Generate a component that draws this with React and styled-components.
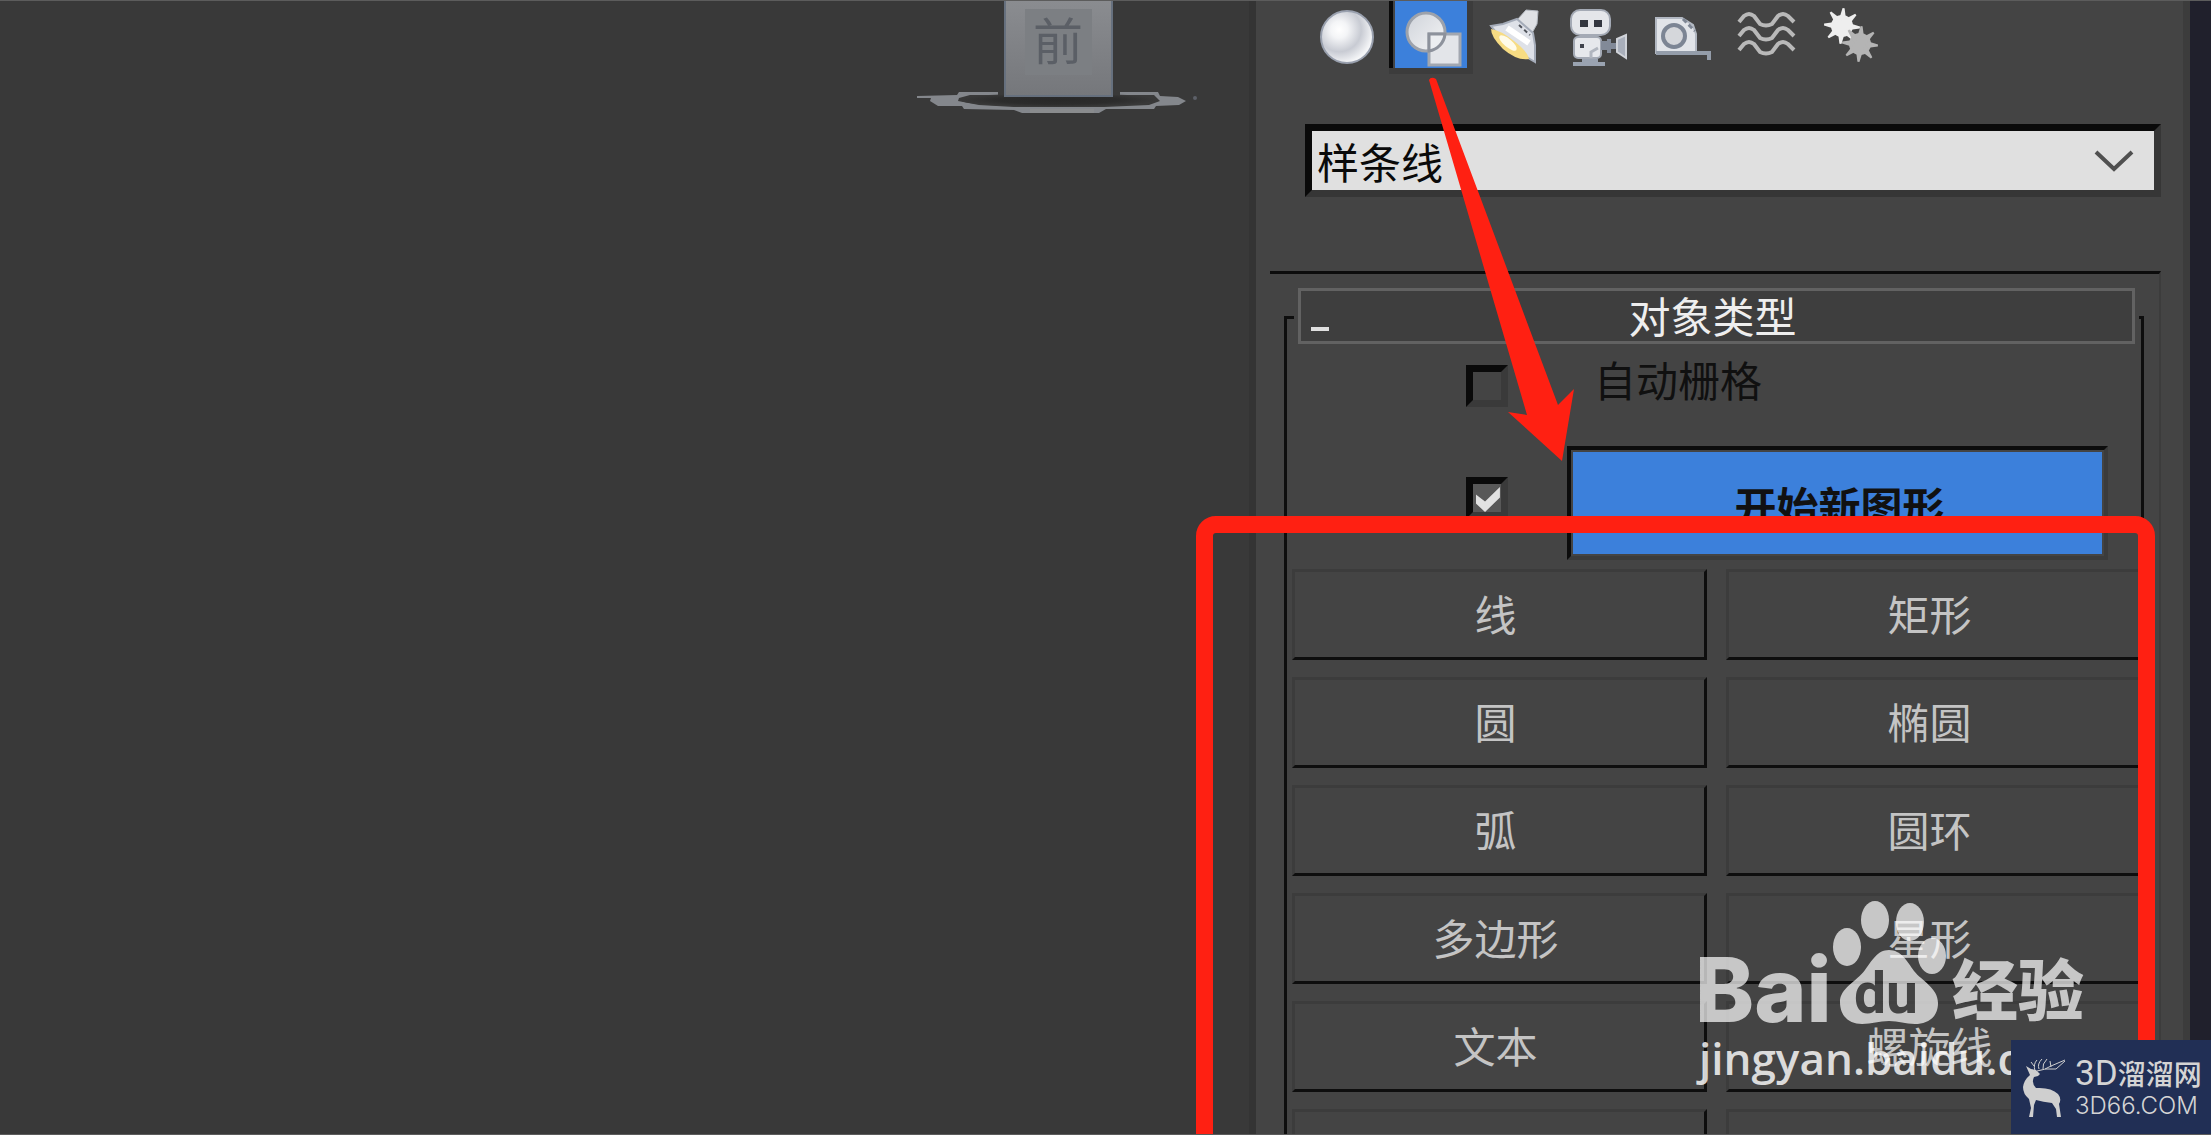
import React, { useState } from 'react';
import styled, { createGlobalStyle } from 'styled-components';

const tools = [
  { name: '几何体', Icon: SphereIcon },
  { name: '图形', Icon: ShapesIcon },
  { name: '灯光', Icon: LampIcon },
  { name: '摄影机', Icon: CameraIcon },
  { name: '辅助对象', Icon: TapeIcon },
  { name: '空间扭曲', Icon: WavesIcon },
  { name: '系统', Icon: GearsIcon },
];

const shapes = [
  '线',
  '矩形',
  '圆',
  '椭圆',
  '弧',
  '圆环',
  '多边形',
  '星形',
  '文本',
  '螺旋线',
  '卵形',
  '截面',
];

export default function App() {
  const [tool, setTool] = useState('图形');
  const [grid, setGrid] = useState(false);
  const [fresh, setFresh] = useState(true);
  return (
    <>
      <GlobalStyle />
      <Page>
        <Viewport>
          <ViewCube />
        </Viewport>
        <Side>
          <Panel>
            <Toolbar>
              {tools.map(({ name, Icon }) => (
                <Tool
                  key={name}
                  aria-label={name}
                  $active={tool === name}
                  onClick={() => setTool(name)}
                >
                  <Icon />
                </Tool>
              ))}
            </Toolbar>
            <SelectBox>
              <Select aria-label="类别" defaultValue="样条线">
                <option>样条线</option>
              </Select>
              <Chevron viewBox="0 0 40 22">
                <path d="M2 2 L20 19 L38 2" />
              </Chevron>
            </SelectBox>
            <Rollout>
              <Header>
                <Dash />
                对象类型
              </Header>
              <Group>
                <Options>
                  <Checks>
                    <Check
                      id="grid"
                      checked={grid}
                      onChange={() => setGrid(!grid)}
                    />
                    <Check
                      aria-labelledby="fresh"
                      checked={fresh}
                      onChange={() => setFresh(!fresh)}
                    />
                  </Checks>
                  <Names>
                    <Label htmlFor="grid">自动栅格</Label>
                    <StartButton id="fresh">开始新图形</StartButton>
                  </Names>
                </Options>
                <ShapeGrid>
                  {shapes.map(item => (
                    <ShapeButton key={item}>{item}</ShapeButton>
                  ))}
                </ShapeGrid>
              </Group>
            </Rollout>
            <Frame />
            <Arrow viewBox="0 0 160 392">
              <path d="M5 10 Q7 6 12 9 L134 335 L150 319 L138 391 L84 342 L103 345 Z" />
            </Arrow>
          </Panel>
        </Side>
        <Watermark>
          <BaiduLogo />
          <Site>jingyan.baidu.com</Site>
        </Watermark>
        <Badge>
          <Deer />
          <BadgeText>
            <BadgeTitle>
              <span>3D</span>溜溜网
            </BadgeTitle>
            <BadgeSite>3D66.COM</BadgeSite>
          </BadgeText>
        </Badge>
      </Page>
    </>
  );
}

function ViewCube() {
  return (
    <Cube viewBox="0 0 286 118">
      <defs>
        <linearGradient id="face" x1="0" y1="0" x2="0" y2="1">
          <stop offset="0" stopColor="#8b8d91" />
          <stop offset="1" stopColor="#75777b" />
        </linearGradient>
        <radialGradient id="shade">
          <stop offset="0" stopColor="#282828" />
          <stop offset="0.6" stopColor="#2c2c2c" />
          <stop offset="1" stopColor="#393939" />
        </radialGradient>
      </defs>
      <path
        fill="#84878c"
        fillRule="evenodd"
        d="M3 95 L43 94 L45 91 H84 V94 H56 L45 97 L44 100 L65 104 L100 106 H190 L235 104 L246 100 L240 94 H206 V91 H244 L246 95 L264 96 L272 100 L265 104 L242 105 L240 108 H192 L185 112 H108 L100 109 L50 108 L48 105 H24 L16 100 L17 97 L3 97 Z"
      />
      <ellipse cx="144" cy="99" rx="98" ry="7" fill="url(#shade)" />
      <path d="M116 110 h64" stroke="#8a8c8e" strokeWidth="4" />
      <circle cx="281" cy="97" r="2" fill="#5d6068" />
      <rect x="91" y="-4" width="107" height="99" fill="url(#face)" stroke="#66707e" strokeWidth="2" />
      <rect x="111" y="8" width="67" height="66" fill="#7c7f83" />
      <text x="144" y="59" fontSize="50" fill="#5b5f66" textAnchor="middle">
        前
      </text>
    </Cube>
  );
}

function SphereIcon() {
  return (
    <Icon64>
      <defs>
        <radialGradient id="ball" cx="0.35" cy="0.36" r="0.65">
          <stop offset="0" stopColor="#ffffff" />
          <stop offset="0.25" stopColor="#f4f5f7" />
          <stop offset="0.65" stopColor="#c8cbd3" />
          <stop offset="1" stopColor="#f4f5f7" />
        </radialGradient>
      </defs>
      <circle cx="32" cy="32" r="26" fill="url(#ball)" stroke="#99a0ae" strokeWidth="2" />
    </Icon64>
  );
}

function ShapesIcon() {
  return (
    <Icon64>
      <defs>
        <linearGradient id="plate" x1="0" y1="0" x2="1" y2="1">
          <stop offset="0" stopColor="#cfd3da" />
          <stop offset="1" stopColor="#f5f5f6" />
        </linearGradient>
      </defs>
      <circle cx="28" cy="29" r="19" fill="url(#plate)" stroke="#9da2ab" strokeWidth="3" />
      <rect x="31" y="31" width="31" height="31" fill="#e3e5e9" stroke="#a2a7b0" strokeWidth="3" />
      <path d="M31 31 H47 A19 19 0 0 1 31 48 Z" fill="#eceef1" stroke="#8d929c" strokeWidth="3" />
    </Icon64>
  );
}

function LampIcon() {
  return (
    <Icon64>
      <path d="M34 15 L43 5 L55 6 L54 19 L49 28 Z" fill="#dfe1e5" stroke="#b5bac2" strokeWidth="1" />
      <path d="M8 21 L20 19 L34 14 L50 28 L52 40 L52 57 Q22 40 8 21 Z" fill="#dee1e8" stroke="#a5acb9" strokeWidth="2" />
      <path d="M36 20 L47 30" stroke="#50545c" strokeWidth="2" strokeDasharray="4 3" />
      <path d="M24 23 L46 38" stroke="#ffffff" strokeWidth="6" />
      <path d="M8 24 Q17 25 31 36 Q45 47 46 54 Q34 56 20 44 Q8 32 8 24 Z" fill="#f7dc83" />
      <ellipse cx="25" cy="38" rx="11" ry="4" transform="rotate(40 25 38)" fill="#fffbe9" />
    </Icon64>
  );
}

function CameraIcon() {
  return (
    <Icon64>
      <rect x="4" y="5" width="39" height="25" rx="9" fill="#e4e6ea" stroke="#a4aab5" strokeWidth="2" />
      <rect x="13" y="15" width="8" height="7" fill="#333740" />
      <rect x="27" y="15" width="8" height="7" fill="#333740" />
      <rect x="7" y="32" width="27" height="21" rx="4" fill="#e6e8ec" stroke="#a4aab5" strokeWidth="2" />
      <rect x="13" y="39" width="4" height="4" fill="#40444d" />
      <path d="M24 53 V47 L31 43" stroke="#b1b6bf" strokeWidth="3" fill="none" />
      <path d="M34 36 H40 V34 H44 V38 H49 V44 H44 V48 H40 V45 H34 Z" fill="#828a98" />
      <path d="M50 34 L59 30 V53 L50 47 Z" fill="#a9afbb" stroke="#d0d3d9" strokeWidth="2" />
      <path d="M15 56 H31 M6 59 H38" stroke="#9aa3b1" strokeWidth="4" />
    </Icon64>
  );
}

function TapeIcon() {
  return (
    <Icon64>
      <path d="M5 13 H31 L42 20 L45 29 V48 H5 Z" fill="#e1e4e9" stroke="#b2b8c2" strokeWidth="2" />
      <path d="M32 14 L44 26" stroke="#7e8694" strokeWidth="3" strokeDasharray="5 3" />
      <circle cx="23" cy="31" r="11" fill="#d5d7db" stroke="#7c8594" strokeWidth="4" />
      <path d="M5 48 H58 V55" stroke="#949daa" strokeWidth="4" fill="none" />
    </Icon64>
  );
}

function WavesIcon() {
  return (
    <Icon64>
      {[17, 31, 45].map(y => (
        <path
          key={y}
          d={`M4 ${y} L9 ${y - 6} Q14 ${y - 10} 19 ${y - 6} L25 ${y + 2} Q31 ${y + 5} 37 ${y + 2} L43 ${y - 6} Q48 ${y - 10} 53 ${y - 6} L59 ${y}`}
          fill="none"
          stroke="#b9b9b9"
          strokeWidth="4"
        />
      ))}
    </Icon64>
  );
}

function Gear({ x, y, color }) {
  return (
    <g transform={`translate(${x} ${y})`} fill={color}>
      <circle r="11" />
      {[5, 50, 95, 140].map(a => (
        <path
          key={a}
          d="M-18 -1 L0 -5 L18 -1 V1 L0 5 L-18 1 Z"
          transform={`rotate(${a})`}
        />
      ))}
    </g>
  );
}

function GearsIcon() {
  return (
    <Icon64>
      <Gear x={23} y={21} color="#eeeeee" />
      <Gear x={41} y={39} color="#b4b4b4" />
    </Icon64>
  );
}

function BaiduLogo() {
  return (
    <Logo viewBox="0 0 400 132">
      <g fill="#ffffff">
        <text x="-1" y="122" fontFamily="Inter" fontWeight="800" fontSize="89">
          Bai
        </text>
        <ellipse cx="151" cy="47" rx="14" ry="19" />
        <ellipse cx="179" cy="20" rx="14" ry="19" />
        <ellipse cx="214" cy="22" rx="14" ry="19" />
        <ellipse cx="236" cy="56" rx="14" ry="18" />
        <path d="M193 50 C205 50 211 61 218 71 C226 81 242 88 242 103 C242 118 231 124 219 124 C209 124 203 121 193 121 C183 121 176 124 166 124 C153 124 144 116 144 102 C144 88 160 82 169 70 C176 61 181 50 193 50 Z" />
        <text x="256" y="115" fontWeight="900" fontSize="66">
          经验
        </text>
      </g>
      <text x="158" y="113" fontFamily="Roboto" fontWeight="700" fontSize="57" fill="#444444">
        du
      </text>
    </Logo>
  );
}

function Deer() {
  return (
    <DeerSvg viewBox="0 0 44 60">
      <path
        fill="#cfcfcf"
        d="M3 8 L8 11 L13 12 L17 16 L15 18 L11 19 Q8 25 13 30 Q28 29 35 36 Q39 41 36 46 L38 59 H34 L33 51 L29 45 Q20 44 13 42 L11 47 L10 59 H6 L8 50 L6 41 Q0 36 0 29 Q1 22 7 17 Z"
      />
      <path
        fill="none"
        stroke="#cfcfcf"
        strokeWidth="1"
        d="M12 13 Q10 6 14 2 M11 8 L8 4 M14 13 Q22 12 28 8 L42 2 M16 11 Q14 6 19 1 M20 11 Q19 6 24 1 M28 9 L27 3 M22 11 L33 11 L42 3"
      />
    </DeerSvg>
  );
}

const GlobalStyle = createGlobalStyle`
  * {
    box-sizing: border-box;
  }
  body {
    margin: 0;
    background: #393939;
    font-family: 'Noto Sans CJK SC', sans-serif;
  }
  button, select {
    font-family: inherit;
    border-radius: 0;
  }
`;
const Page = styled.div`
  position: relative;
  display: grid;
  grid-template-columns: minmax(0, 1315fr) minmax(0, 1000fr);
  height: 100vh;
  overflow: hidden;
  border-top: 1px solid #5c5c5c;
  border-bottom: 1px solid #5c5c5c;
`;
const Viewport = styled.main`
  display: flex;
  justify-content: flex-end;
  align-items: flex-start;
  padding-right: 49px;
  background: #393939;
  border-right: 7px solid #343434;
`;
const Cube = styled.svg`
  width: 286px;
  height: 118px;
`;
const Side = styled.aside`
  min-height: 0;
  background: #20202c;
  padding-right: 21px;
`;
const Panel = styled.div`
  position: relative;
  min-height: 100%;
  padding: 0 22px 0 14px;
  background: #444444;
  border-right: 7px solid #3c3c3c;
`;
const Toolbar = styled.div`
  display: flex;
  margin-left: 35px;
`;
const Tool = styled.button`
  display: flex;
  align-items: center;
  justify-content: center;
  width: 84px;
  height: 73px;
  padding: 0 0 2px;
  border: 0 solid #3c3c3c;
  background: ${p => (p.$active ? '#3c80db' : 'transparent')};
  ${p =>
    p.$active &&
    `
    padding: 0 0 0 4px;
    border-width: 0 6px 6px 0;
    box-shadow: inset 4px 0 #0a0a0a, inset 6px 0 #444444;
  `}
`;
const Icon64 = styled.svg.attrs({ viewBox: '0 0 64 64' })`
  flex: none;
  width: 64px;
  height: 64px;
`;
const SelectBox = styled.div`
  display: grid;
  align-items: center;
  margin: 50px 0 0 35px;
`;
const Select = styled.select`
  grid-area: 1 / 1;
  appearance: none;
  width: 100%;
  height: 73px;
  padding: 0 6px 0 5px;
  border: 7px solid;
  border-color: #0a0a0a #363636 #363636 #0a0a0a;
  background: #e0e0e0;
  color: #0a0a0a;
  font-size: 42px;
  line-height: 56px;
`;
const Chevron = styled.svg`
  grid-area: 1 / 1;
  justify-self: end;
  width: 40px;
  height: 22px;
  margin-right: 27px;
  pointer-events: none;
  fill: none;
  stroke: #505050;
  stroke-width: 4px;
`;
const Rollout = styled.section`
  margin-top: 74px;
  border-top: 3px solid #0c0c0c;
  border-right: 2px solid #3c3c3c;
`;
const Header = styled.h2`
  position: relative;
  z-index: 1;
  display: flex;
  align-items: center;
  justify-content: center;
  height: 56px;
  margin: 14px 24px 0 28px;
  padding: 0 8px 2px 0;
  border: 3px solid #626262;
  box-shadow: 0 0 0 4px #444444;
  background: #3e3e3e;
  color: #eeeeee;
  font-size: 42px;
  font-weight: 400;
  line-height: 48px;
`;
const Dash = styled.i`
  position: absolute;
  left: 10px;
  bottom: 10px;
  width: 18px;
  height: 4px;
  background: #e0e0e0;
`;
const Group = styled.div`
  margin: -28px 15px 0 14px;
  padding: 25px 0 0 5px;
  border: 3px solid #0e0e0e;
  border-bottom: 0;
`;
const Options = styled.div`
  display: flex;
  gap: 59px;
  padding: 0 33px 0 174px;
`;
const Checks = styled.div`
  display: flex;
  flex-direction: column;
  gap: 70px;
  padding-top: 21px;
`;
const Check = styled.input.attrs({ type: 'checkbox' })`
  appearance: none;
  display: grid;
  width: 42px;
  height: 42px;
  margin: 0;
  border: 7px solid;
  border-color: #0a0a0a #3a3a3a #3a3a3a #0a0a0a;
  background: #444444;
  &:checked {
    background: #585858;
  }
  &:checked::before {
    content: '';
    margin: 3px 1px 0 3px;
    height: 25px;
    background: #e2e2e2;
    clip-path: polygon(0 30%, 38% 58%, 100% 0, 100% 42%, 38% 100%, 0 66%);
  }
`;
const Names = styled.div`
  display: flex;
  flex: 1;
  flex-direction: column;
  gap: 46px;
  padding-top: 14px;
`;
const Label = styled.label`
  padding-left: 27px;
  color: #101010;
  font-size: 42px;
  line-height: 42px;
`;
const StartButton = styled.button`
  height: 114px;
  padding: 4px 0 0 4px;
  border: 4px solid;
  border-color: #0c0c0c #3b3b3b #3b3b3b #0c0c0c;
  box-shadow: inset 0 0 0 2px #444444;
  background: #3c80db;
  color: #111111;
  font-size: 42px;
  font-weight: 700;
  line-height: 56px;
`;
const ShapeGrid = styled.div`
  display: grid;
  grid-template-columns: 1fr 1fr;
  gap: 17px 19px;
  margin-top: 9px;
`;
const ShapeButton = styled.button`
  height: 91px;
  padding: 0 8px 4px 0;
  border: 3px solid;
  border-color: #3c3c3c #0e0e0e #0e0e0e #3c3c3c;
  background: #444444;
  color: #c4c4c4;
  font-size: 42px;
  line-height: 56px;
`;
const Frame = styled.div`
  position: absolute;
  z-index: 2;
  top: 515px;
  right: 28px;
  bottom: -40px;
  left: -60px;
  border: 17px solid #ff2012;
  border-radius: 20px;
  pointer-events: none;
`;
const Arrow = styled.svg`
  position: absolute;
  z-index: 2;
  top: 69px;
  left: 168px;
  width: 160px;
  height: 392px;
  fill: #ff2012;
  pointer-events: none;
`;
const Watermark = styled.div`
  position: absolute;
  z-index: 3;
  right: 115px;
  bottom: 50px;
  width: 400px;
  pointer-events: none;
`;
const Logo = styled.svg`
  display: block;
  width: 400px;
  height: 132px;
  opacity: 0.7;
`;
const Site = styled.div`
  padding-left: 3px;
  color: rgba(255, 255, 255, 0.82);
  font-family: 'Open Sans', sans-serif;
  font-size: 44px;
  font-weight: 600;
  line-height: 52px;
`;
const Badge = styled.div`
  position: absolute;
  z-index: 4;
  right: 0;
  bottom: -1px;
  display: flex;
  align-items: center;
  gap: 8px;
  width: 200px;
  height: 95px;
  padding-left: 12px;
  background: #212f55;
  color: #d4d4d4;
`;
const DeerSvg = styled.svg`
  flex: none;
  width: 44px;
  height: 60px;
`;
const BadgeText = styled.div`
  white-space: nowrap;
`;
const BadgeTitle = styled.div`
  font-size: 28px;
  font-weight: 500;
  line-height: 36px;
  span {
    font-family: Roboto, sans-serif;
    font-size: 35px;
    font-weight: 400;
  }
`;
const BadgeSite = styled.div`
  font-family: Inter, sans-serif;
  font-size: 24px;
  font-weight: 300;
  line-height: 28px;
`;
